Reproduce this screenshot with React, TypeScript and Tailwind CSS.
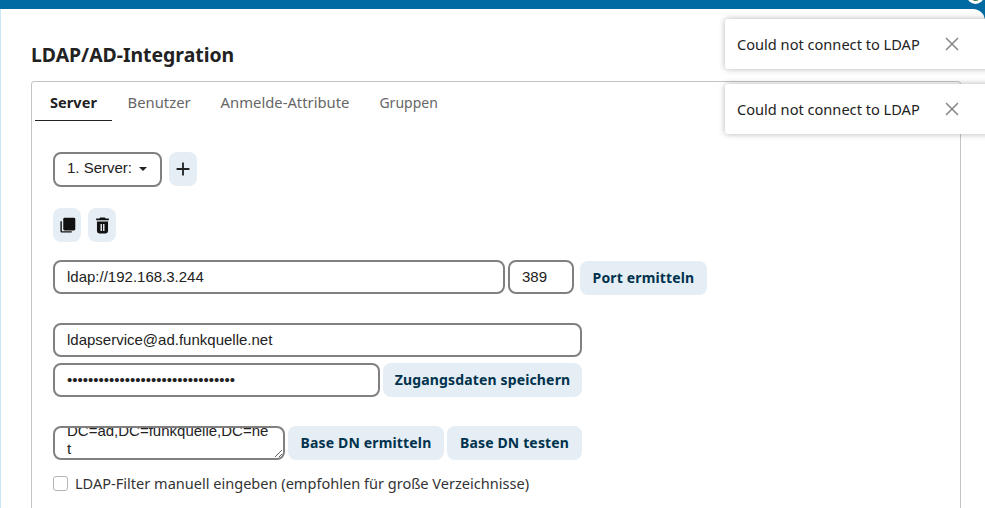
import { useEffect, useRef } from "react";
import { X } from "lucide-react";

const ui = "font-['Noto_Sans',sans-serif]";
const field = "font-['Liberation_Sans',sans-serif] text-[15px] text-[#222] bg-white border-2 border-[#808080] rounded-[8px] h-[34px] px-[12px] pb-[2px] outline-none";
const btn = "font-['Noto_Sans',sans-serif] font-bold text-[14px] tracking-[0.15px] text-[#00324d] bg-[#e6eef5] rounded-[8px] h-[34px] pb-[1px] flex items-center justify-center";

function Toast({ top }: { top: string }) {
  return (
    <div className={`absolute left-[725px] w-[300px] h-[50px] bg-white rounded-[3px] shadow-[0_0_6px_rgba(0,0,0,0.3)] flex items-center pl-[12px] pt-[1px] ${top}`}>
      <span className={`${ui} text-[14.6px] text-[#222]`}>Could not connect to LDAP</span>
      <X className="absolute left-[216px] top-[14px] w-[22px] h-[22px] text-[#8a8a8a]" strokeWidth={1.8} />
    </div>
  );
}

function App() {
  const baseDn = useRef<HTMLTextAreaElement>(null);

  // the field is scrolled down a little in the picture
  useEffect(() => {
    if (baseDn.current) baseDn.current.scrollTop = 6;
  }, []);

  return (
    <div className="relative w-[985px] h-[508px] overflow-hidden bg-[#006aa3]">
      <div className="absolute left-0 top-[9px] w-full h-[499px] bg-white rounded-tr-[12px] border-l border-[#c9e6f5]" />
      <div className="absolute left-[967px] top-[-13px] w-[17px] h-[17px] rounded-full bg-white flex items-center justify-center">
        <div className="w-[11px] h-[11px] rounded-full bg-[#2d7b41]" />
      </div>

      <div className={`relative pt-[9px] pl-[31px] ${ui}`}>
        <h2 className="mt-[30px] text-[19.4px] leading-[32px] font-bold text-[#222]">LDAP/AD-Integration</h2>

        <div className="mt-[10px] w-[930px] h-[440px] border border-[#c4c4c4] rounded-t-[3px]">
          <div className="flex pl-[3px] h-[39px] text-[14.8px]">
            <div className="w-[77px] h-full border-b border-[#222] text-center text-[14.6px] font-bold text-[#222] leading-[40px]">Server</div>
            <div className="ml-[15.6px] text-[#666] leading-[40px]">Benutzer</div>
            <div className="ml-[30px] text-[#666] leading-[40px]">Anmelde-Attribute</div>
            <div className="ml-[30px] text-[14px] text-[#666] leading-[42px]">Gruppen</div>
          </div>

          <div className="pl-[21px]">
            <div className="mt-[31px] flex gap-[7px] items-start">
              <div className="font-['Liberation_Sans',sans-serif] text-[15px] text-[#222] w-[109px] h-[35px] border-2 border-[#808080] rounded-[8px] flex items-center pl-[12px] pb-[2px]">
                1. Server:
                <span className="ml-[7px] w-0 h-0 border-x-[4px] border-x-transparent border-t-[4px] border-t-[#222]" />
              </div>
              <div className="w-[28px] h-[34px] bg-[#e6eef5] rounded-[8px] flex items-center justify-center">
                <svg viewBox="0 0 24 24" className="w-[22px] h-[22px] fill-[#222]">
                  <path d="M19 13h-6v6h-2v-6H5v-2h6V5h2v6h6v2Z" />
                </svg>
              </div>
            </div>

            <div className="mt-[21px] flex gap-[7px]">
              <div className="w-[28px] h-[34px] bg-[#e6eef5] rounded-[8px] flex items-center justify-center">
                <svg viewBox="0 0 24 24" className="w-[17px] h-[17px] fill-[#111]">
                  <path d="M4 6H2v14a2 2 0 0 0 2 2h14v-2H4V6Z" />
                  <rect x="6" y="1" width="17" height="18" rx="2" />
                </svg>
              </div>
              <div className="w-[28px] h-[34px] bg-[#e6eef5] rounded-[8px] flex items-center justify-center">
                <svg viewBox="0 0 24 24" className="w-[19px] h-[19px] fill-[#111]">
                  <path d="M20 3h-4l-1-1H9L8 3H4v2.5h16V3ZM5 7v12a3 3 0 0 0 3 3h8a3 3 0 0 0 3-3V7H5Zm4.5 3h1.8v9H9.5v-9Zm3.2 0h1.8v9h-1.8v-9Z" />
                </svg>
              </div>
            </div>

            <div className="mt-[18px] flex items-start">
              <input readOnly value="ldap://192.168.3.244" className={`${field} w-[452px]`} />
              <input readOnly value="389" className={`${field} w-[66px] ml-[3px]`} />
              <div className={`${btn} w-[127px] ml-[6px] mt-[1px]`}>Port ermitteln</div>
            </div>

            <div className="mt-[28px]">
              <input readOnly value="ldapservice@ad.funkquelle.net" className={`${field} block w-[529px]`} />
            </div>
            <div className="mt-[6px] flex items-center">
              <input readOnly type="password" value="12345678901234567890123456789012" className={`${field} w-[327px]`} />
              <div className={`${btn} w-[199px] ml-[3px]`}>Zugangsdaten speichern</div>
            </div>

            <div className="mt-[29px] flex items-center">
              <textarea ref={baseDn} readOnly value="DC=ad,DC=funkquelle,DC=net" className={`${field} w-[232px] py-0 leading-[18px] block resize-y overflow-hidden`} />
              <div className={`${btn} w-[156px] ml-[3px]`}>Base DN ermitteln</div>
              <div className={`${btn} w-[135px] ml-[3px]`}>Base DN testen</div>
            </div>

            <label className="mt-[13px] flex items-center text-[14.55px] text-[#333]">
              <span className="w-[15px] h-[15px] border border-[#b5b5b5] rounded-[3px] bg-white" />
              <span className="ml-[7px]">LDAP-Filter manuell eingeben (empfohlen für große Verzeichnisse)</span>
            </label>
          </div>
        </div>
      </div>

      <Toast top="top-[19px]" />
      <Toast top="top-[84px]" />
    </div>
  );
}

export default App;
